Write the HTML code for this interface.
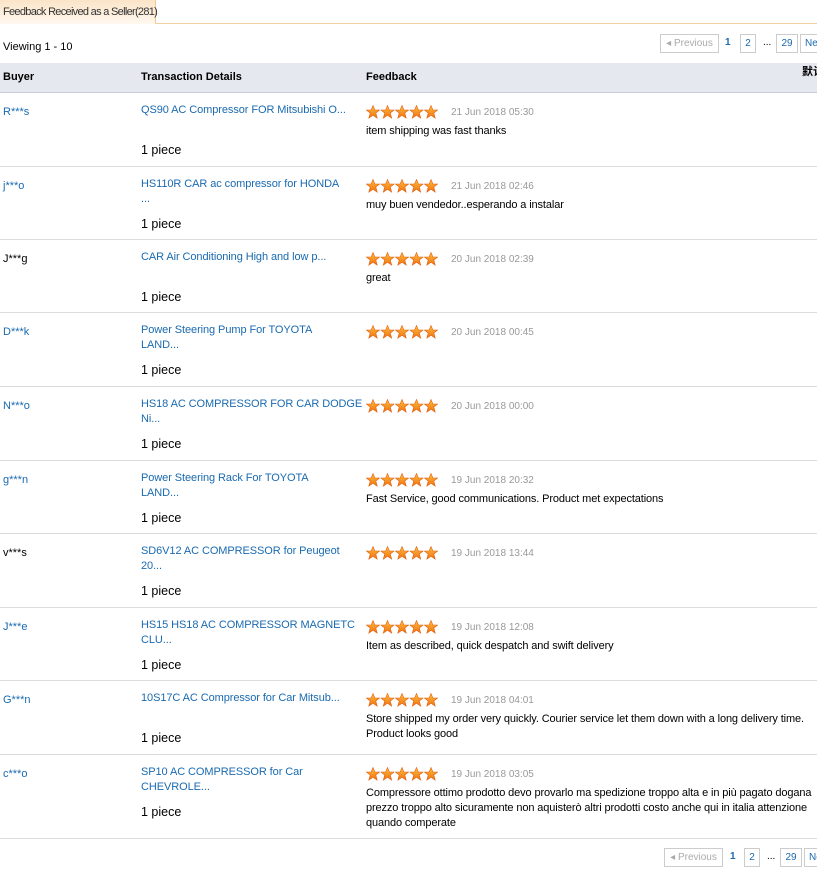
<!DOCTYPE html>
<html><head><meta charset="utf-8"><style>
body{margin:0;width:817px;height:873px;overflow:hidden;background:#fff;font-family:"Liberation Sans",Arial,sans-serif;font-size:11px;color:#000;position:relative}
.a{position:absolute;white-space:nowrap}
.tab{left:0;top:0;height:24px;width:152px;border-right:1px solid #f0c890;background:linear-gradient(#fbe4c8,#fff8ef);font-size:11px;letter-spacing:-0.7px;line-height:24px;padding-left:3px;color:#333}
.topline{left:155px;top:23px;width:662px;height:1px;background:#f0d0a0}
.hdr{left:0;top:63px;width:817px;height:29px;background:#e6e8f0;border-bottom:1px solid #c8ccd6}
.hdr b{position:absolute;top:8px;font-size:11px}
.pg{height:17px;border:1px solid #ccc;line-height:17px;text-align:center;color:#1a6ab0;font-size:10px}
.row{position:absolute;left:0;width:817px;border-bottom:1px solid #dcdcdc}
.buyer{position:absolute;left:3px;top:13px;color:#1a6ab0}
.buyer.k{color:#000}
.t{position:absolute;left:141px;top:10px;color:#1a6ab0;line-height:15px;white-space:nowrap;letter-spacing:-0.08px}
.pc{position:absolute;left:141px;top:50px;font-size:12.5px}
.st{position:absolute;left:366px;top:12px}
.dt{position:absolute;left:451px;top:14px;color:#999;font-size:10px}
.fb{position:absolute;left:366px;top:31px;line-height:15px;white-space:nowrap;font-size:11px;letter-spacing:-0.12px}
</style></head><body>
<svg width="0" height="0" style="position:absolute"><defs><linearGradient id="g" x1="0" y1="0" x2="0" y2="1"><stop offset="0" stop-color="#ffc040"/><stop offset="1" stop-color="#f07010"/></linearGradient><symbol id="s" viewBox="0 0 14 14"><path d="M7 0.5L8.9 5H13.6L9.8 8L11.2 13.2L7 10.2L2.8 13.2L4.2 8L0.4 5H5.1Z" fill="url(#g)" stroke="#e06010" stroke-width="0.6"/></symbol></defs></svg>
<div class="a tab">Feedback Received as a Seller(281)</div>
<div class="a topline"></div>
<div class="a" style="left:3px;top:41px;font-size:11px">Viewing 1 - 10</div>
<div class="a pg" style="left:660px;top:34px;width:57px;color:#aaa">◂ Previous</div>
<div class="a" style="left:725px;top:37px;color:#1a6ab0;font-weight:bold;font-size:10px">1</div>
<div class="a pg" style="left:740px;top:34px;width:14px">2</div>
<div class="a" style="left:763px;top:37px;font-size:10px">...</div>
<div class="a pg" style="left:776px;top:34px;width:20px">29</div>
<div class="a pg" style="left:800px;top:34px;width:30px;text-align:left;padding-left:4px">Next</div>
<div class="a hdr"><b style="left:3px">Buyer</b><b style="left:141px">Transaction Details</b><b style="left:366px">Feedback</b><span style="position:absolute;left:802px;top:0px;font-weight:bold;font-family:'Noto Sans CJK SC',sans-serif;font-size:11px">默认</span></div>

<div class="row" style="top:93px;height:73px"><span class="buyer">R***s</span><div class="t">QS90 AC Compressor FOR Mitsubishi O...</div><div class="pc">1 piece</div><svg class="st" width="72" height="14"><use href="#s" x="0" width="14" height="14"/><use href="#s" x="14.5" width="14" height="14"/><use href="#s" x="29" width="14" height="14"/><use href="#s" x="43.5" width="14" height="14"/><use href="#s" x="58" width="14" height="14"/></svg><span class="dt">21 Jun 2018 05:30</span><div class="fb">item shipping was fast thanks</div></div>
<div class="row" style="top:167px;height:72px"><span class="buyer">j***o</span><div class="t">HS110R CAR ac compressor for HONDA<br>...</div><div class="pc">1 piece</div><svg class="st" width="72" height="14"><use href="#s" x="0" width="14" height="14"/><use href="#s" x="14.5" width="14" height="14"/><use href="#s" x="29" width="14" height="14"/><use href="#s" x="43.5" width="14" height="14"/><use href="#s" x="58" width="14" height="14"/></svg><span class="dt">21 Jun 2018 02:46</span><div class="fb">muy buen vendedor..esperando a instalar</div></div>
<div class="row" style="top:240px;height:72px"><span class="buyer k">J***g</span><div class="t">CAR Air Conditioning High and low p...</div><div class="pc">1 piece</div><svg class="st" width="72" height="14"><use href="#s" x="0" width="14" height="14"/><use href="#s" x="14.5" width="14" height="14"/><use href="#s" x="29" width="14" height="14"/><use href="#s" x="43.5" width="14" height="14"/><use href="#s" x="58" width="14" height="14"/></svg><span class="dt">20 Jun 2018 02:39</span><div class="fb">great</div></div>
<div class="row" style="top:313px;height:73px"><span class="buyer">D***k</span><div class="t">Power Steering Pump For TOYOTA<br>LAND...</div><div class="pc">1 piece</div><svg class="st" width="72" height="14"><use href="#s" x="0" width="14" height="14"/><use href="#s" x="14.5" width="14" height="14"/><use href="#s" x="29" width="14" height="14"/><use href="#s" x="43.5" width="14" height="14"/><use href="#s" x="58" width="14" height="14"/></svg><span class="dt">20 Jun 2018 00:45</span></div>
<div class="row" style="top:387px;height:73px"><span class="buyer">N***o</span><div class="t">HS18 AC COMPRESSOR FOR CAR DODGE<br>Ni...</div><div class="pc">1 piece</div><svg class="st" width="72" height="14"><use href="#s" x="0" width="14" height="14"/><use href="#s" x="14.5" width="14" height="14"/><use href="#s" x="29" width="14" height="14"/><use href="#s" x="43.5" width="14" height="14"/><use href="#s" x="58" width="14" height="14"/></svg><span class="dt">20 Jun 2018 00:00</span></div>
<div class="row" style="top:461px;height:72px"><span class="buyer">g***n</span><div class="t">Power Steering Rack For TOYOTA<br>LAND...</div><div class="pc">1 piece</div><svg class="st" width="72" height="14"><use href="#s" x="0" width="14" height="14"/><use href="#s" x="14.5" width="14" height="14"/><use href="#s" x="29" width="14" height="14"/><use href="#s" x="43.5" width="14" height="14"/><use href="#s" x="58" width="14" height="14"/></svg><span class="dt">19 Jun 2018 20:32</span><div class="fb">Fast Service, good communications. Product met expectations</div></div>
<div class="row" style="top:534px;height:73px"><span class="buyer k">v***s</span><div class="t">SD6V12 AC COMPRESSOR for Peugeot<br>20...</div><div class="pc">1 piece</div><svg class="st" width="72" height="14"><use href="#s" x="0" width="14" height="14"/><use href="#s" x="14.5" width="14" height="14"/><use href="#s" x="29" width="14" height="14"/><use href="#s" x="43.5" width="14" height="14"/><use href="#s" x="58" width="14" height="14"/></svg><span class="dt">19 Jun 2018 13:44</span></div>
<div class="row" style="top:608px;height:72px"><span class="buyer">J***e</span><div class="t">HS15 HS18 AC COMPRESSOR MAGNETC<br>CLU...</div><div class="pc">1 piece</div><svg class="st" width="72" height="14"><use href="#s" x="0" width="14" height="14"/><use href="#s" x="14.5" width="14" height="14"/><use href="#s" x="29" width="14" height="14"/><use href="#s" x="43.5" width="14" height="14"/><use href="#s" x="58" width="14" height="14"/></svg><span class="dt">19 Jun 2018 12:08</span><div class="fb">Item as described, quick despatch and swift delivery</div></div>
<div class="row" style="top:681px;height:73px"><span class="buyer">G***n</span><div class="t">10S17C AC Compressor for Car Mitsub...</div><div class="pc">1 piece</div><svg class="st" width="72" height="14"><use href="#s" x="0" width="14" height="14"/><use href="#s" x="14.5" width="14" height="14"/><use href="#s" x="29" width="14" height="14"/><use href="#s" x="43.5" width="14" height="14"/><use href="#s" x="58" width="14" height="14"/></svg><span class="dt">19 Jun 2018 04:01</span><div class="fb">Store shipped my order very quickly. Courier service let them down with a long delivery time.<br>Product looks good</div></div>
<div class="row" style="top:755px;height:83px"><span class="buyer">c***o</span><div class="t">SP10 AC COMPRESSOR for Car<br>CHEVROLE...</div><div class="pc">1 piece</div><svg class="st" width="72" height="14"><use href="#s" x="0" width="14" height="14"/><use href="#s" x="14.5" width="14" height="14"/><use href="#s" x="29" width="14" height="14"/><use href="#s" x="43.5" width="14" height="14"/><use href="#s" x="58" width="14" height="14"/></svg><span class="dt">19 Jun 2018 03:05</span><div class="fb">Compressore ottimo prodotto devo provarlo ma spedizione troppo alta e in più pagato dogana<br>prezzo troppo alto sicuramente non aquisterò altri prodotti costo anche qui in italia attenzione<br>quando comperate</div></div>

<div class="a pg" style="left:664px;top:848px;width:57px;color:#aaa">◂ Previous</div>
<div class="a" style="left:730px;top:851px;color:#1a6ab0;font-weight:bold;font-size:10px">1</div>
<div class="a pg" style="left:744px;top:848px;width:14px">2</div>
<div class="a" style="left:767px;top:851px;font-size:10px">...</div>
<div class="a pg" style="left:780px;top:848px;width:20px">29</div>
<div class="a pg" style="left:804px;top:848px;width:30px;text-align:left;padding-left:4px">Next</div>
</body></html>
